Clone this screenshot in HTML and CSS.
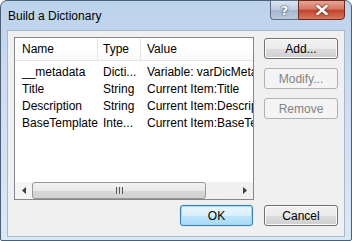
FILE: index.html
```html
<!DOCTYPE html>
<html lang="en">
<head>
  <meta charset="UTF-8" />
  <title>Build a Dictionary</title>
  <link rel="stylesheet" href="styles.css">
</head>
<body>
  <div class="window">
    <div class="titlebar">
      <div class="title">Build a Dictionary</div>
      <div class="caption-btns">
        <div class="cap help">?</div>
        <div class="cap close">
          <svg width="12" height="10" viewBox="0 0 12 10">
            <path d="M1.5 1 L10.5 9 M10.5 1 L1.5 9" stroke="#fff" stroke-width="2.4" stroke-linecap="square" />
          </svg>
        </div>
      </div>
    </div>

    <div class="client">
      <div class="listbox">
        <div class="list-head">
          <div class="col c-name">Name</div>
          <div class="col c-type">Type</div>
          <div class="col c-value">Value</div>
        </div>
        <div class="rows">
          <div class="row"><div class="col c-name">__metadata</div><div class="col c-type">Dicti...</div><div class="col c-value">Variable: varDicMetadata</div></div>
          <div class="row"><div class="col c-name">Title</div><div class="col c-type">String</div><div class="col c-value">Current Item:Title</div></div>
          <div class="row"><div class="col c-name">Description</div><div class="col c-type">String</div><div class="col c-value">Current Item:Description</div></div>
          <div class="row"><div class="col c-name">BaseTemplate</div><div class="col c-type">Inte...</div><div class="col c-value">Current Item:BaseTemplate</div></div>
        </div>
        <div class="hscroll">
          <div class="arrow">
            <svg width="4" height="7" viewBox="0 0 4 7"><path d="M4 0 L0 3.5 L4 7 Z" fill="#3c3c3c" /></svg>
          </div>
          <div class="thumb"><span class="grip"></span></div>
          <div class="track"></div>
          <div class="arrow">
            <svg width="4" height="7" viewBox="0 0 4 7"><path d="M0 0 L4 3.5 L0 7 Z" fill="#3c3c3c" /></svg>
          </div>
        </div>
      </div>

      <div class="side-btns">
        <button class="btn">Add...</button>
        <button class="btn" disabled>Modify...</button>
        <button class="btn" disabled>Remove</button>
      </div>

      <div class="footer">
        <button class="btn default">OK</button>
        <button class="btn">Cancel</button>
      </div>
    </div>
  </div>
</body>
</html>
```

FILE: styles.css
```css
body {
  margin: 0;
  padding: 0;
  font-family: 'Liberation Sans', Arial, sans-serif;
  font-size: 12px;
  background-color: #ffffff;
  overflow: hidden;
}

.window {
  width: 352px;
  height: 241px;
  box-sizing: border-box;
  border: 1px solid #4d5f75;
  border-radius: 7px 7px 2px 2px;
  background: linear-gradient(to bottom, #bcd3ec 0%, #cfdff2 45%, #dbe8f6 100%);
  padding: 0 6px 3px 6px;
  display: flex;
  flex-direction: column;
}

.titlebar {
  height: 29px;
  display: flex;
  align-items: flex-start;
}

.title {
  padding: 8px 0 0 1px;
  color: #000;
  line-height: 14px;
}

.caption-btns {
  margin-left: auto;
  display: flex;
  margin-top: -1px;
}

.cap {
  height: 20px;
  box-sizing: border-box;
  border: 1px solid #5b6e87;
  display: flex;
  align-items: center;
  justify-content: center;
}

.help {
  width: 28px;
  border-right: none;
  border-radius: 0 0 0 4px;
  background: linear-gradient(to bottom, #dbe5f1 0%, #bccbdd 50%, #a5b6cb 51%, #bccadc 100%);
  color: #fff;
  font-family: 'DejaVu Sans', sans-serif;
  font-weight: bold;
  font-size: 13px;
  text-shadow: 0 0 2px #33475f, 0 0 1px #33475f;
}

.close {
  width: 47px;
  border-radius: 0 0 4px 0;
  border-color: #6b2a20;
  background: linear-gradient(to bottom, #e8a493 0%, #d47763 45%, #c2432a 52%, #d6785f 100%);
}

.close svg {
  filter: drop-shadow(0 0 1px #4a1a12);
}

.client {
  flex: 1;
  background-color: #f0f0f0;
  border: 1px solid #a6b8cf;
  padding: 6px 6px 0 6px;
  display: grid;
  grid-template-columns: 240px 74px;
  grid-template-rows: 163px 21px;
  column-gap: 10px;
  row-gap: 5px;
}

.listbox {
  border: 1px solid #828790;
  background-color: #fff;
  display: flex;
  flex-direction: column;
  overflow: hidden;
}

.list-head {
  display: flex;
  height: 22px;
  border-bottom: 1px solid #e5e5e5;
  background: linear-gradient(to bottom, #ffffff 0%, #ffffff 60%, #f7f8fa 100%);
}

.list-head .col {
  line-height: 22px;
  border-right: 1px solid #e5e5e5;
}

.col {
  white-space: nowrap;
  overflow: hidden;
  box-sizing: border-box;
}

.c-name {
  width: 83px;
  padding-left: 7px;
}

.c-type {
  width: 43px;
  padding-left: 5px;
}

.c-value {
  flex: 1;
  padding-left: 6px;
  text-overflow: clip;
}

.list-head .c-value {
  border-right: none;
}

.rows {
  flex: 1;
  padding-top: 3px;
}

.row {
  display: flex;
  height: 17px;
  line-height: 17px;
}

.hscroll {
  height: 17px;
  display: flex;
  background-color: #f0f0f0;
  background: linear-gradient(to right, #f5f5f5, #f0f0f0);
}

.hscroll .arrow {
  width: 17px;
  display: flex;
  align-items: center;
  justify-content: center;
}

.thumb {
  width: 174px;
  box-sizing: border-box;
  border: 1px solid #979797;
  border-radius: 3px;
  background: linear-gradient(to bottom, #f4f4f4 0%, #e8e8e8 50%, #d8d8d8 51%, #d2d2d2 100%);
  display: flex;
  align-items: center;
  justify-content: center;
}

.grip {
  width: 7px;
  height: 7px;
  background: repeating-linear-gradient(to right, #555 0px, #555 1px, #e0e0e0 1px, #e0e0e0 3px);
}

.track {
  flex: 1;
}

.side-btns {
  display: flex;
  flex-direction: column;
  gap: 9px;
  padding-top: 1px;
}

.btn {
  height: 21px;
  width: 74px;
  box-sizing: border-box;
  border: 1px solid #707070;
  border-radius: 3px;
  background: linear-gradient(to bottom, #f2f2f2 0%, #ebebeb 50%, #dddddd 51%, #cfcfcf 100%);
  box-shadow: inset 0 0 0 1px #fcfcfc;
  font-family: 'Liberation Sans', Arial, sans-serif;
  font-size: 12px;
  color: #000;
  padding: 0;
  cursor: pointer;
}

.btn:disabled {
  border-color: #adb2b5;
  background: #f4f4f4;
  box-shadow: none;
  color: #838383;
}

.footer {
  grid-column: 1 / 3;
  display: flex;
  justify-content: flex-end;
  gap: 11px;
}

.btn.default {
  width: 73px;
  border-color: #3c7fb1;
  background: linear-gradient(to bottom, #eaf6fd 0%, #d9f0fc 50%, #bee6fd 51%, #a7d9f5 100%);
  box-shadow: inset 0 0 0 1px #9fdaf9, 0 0 1px #5fb6e6;
}
```
